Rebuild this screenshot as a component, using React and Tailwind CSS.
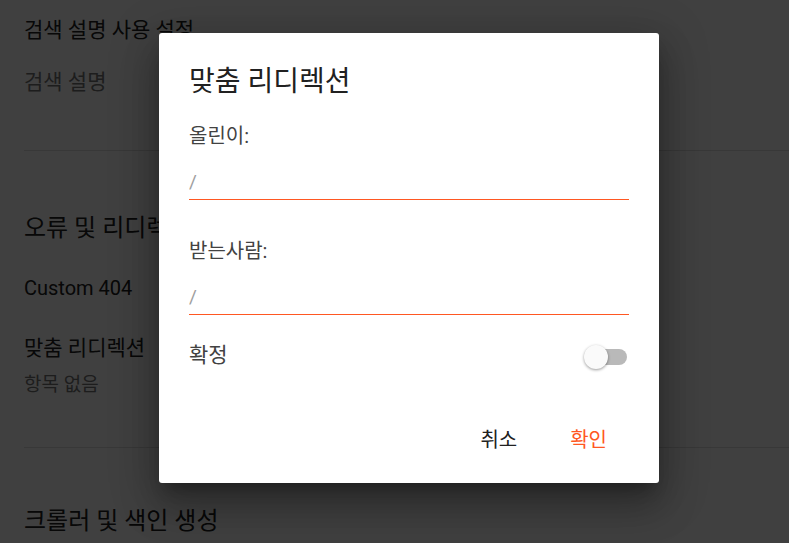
import { useState } from 'react';

const font = { fontFamily: 'Roboto, "Noto Sans CJK KR", sans-serif' };

const Field = ({ label, value, setValue, className }) => (
  <div className={`flex flex-col ${className}`}>
    <label className="text-[20px] leading-[28px] text-[#424242]">{label}</label>
    <input
      className="mt-[18px] w-full border-b border-[#ff5722] pb-[3px] text-[19px] leading-[28px] text-[#212121] placeholder-[#9e9e9e] outline-none"
      placeholder="/"
      value={value}
      onChange={(e) => setValue(e.target.value)}
    />
  </div>
);

const App = () => {
  const [from, setFrom] = useState('');
  const [to, setTo] = useState('');
  const [on, setOn] = useState(false);

  return (
    <div className="relative h-[543px] w-[789px] overflow-hidden bg-white" style={font}>
      {/* page behind the dialog */}
      <div className="flex flex-col px-[24px] text-[#212121]">
        <div className="pt-[15px] text-[21px] leading-[30px]">검색 설명 사용 설정</div>
        <div className="mt-[22px] text-[21px] leading-[30px] text-[#757575]">검색 설명</div>
        <div className="mt-[53px] -mr-[24px] border-t border-[#e0e0e0]" />
        <div className="mt-[61px] text-[24px] leading-[32px]">오류 및 리디렉션</div>
        <div className="mt-[30px] text-[20px] leading-[28px]">Custom 404</div>
        <div className="mt-[32px] text-[21px] leading-[28px]">맞춤 리디렉션</div>
        <div className="mt-[10px] text-[19px] leading-[26px] text-[#757575]">항목 없음</div>
        <div className="mt-[49px] -mr-[24px] border-t border-[#e0e0e0]" />
        <div className="mt-[57px] text-[24px] leading-[32px]">크롤러 및 색인 생성</div>
      </div>

      {/* scrim */}
      <div className="absolute inset-0 bg-black/75" />

      {/* dialog */}
      <div className="absolute left-[159px] top-[33px] flex h-[450px] w-[500px] flex-col rounded-[3px] bg-white px-[30px] pt-[30px] shadow-[0_11px_15px_-7px_rgba(0,0,0,0.3),0_24px_38px_3px_rgba(0,0,0,0.2),0_9px_46px_8px_rgba(0,0,0,0.18)]">
        <h2 className="text-[28px] leading-[38px] text-[#212121]">맞춤 리디렉션</h2>
        <Field className="mt-[21px]" label="올린이:" value={from} setValue={setFrom} />
        <Field className="mt-[37px]" label="받는사람:" value={to} setValue={setTo} />
        <div className="mt-[26px] flex items-center justify-between">
          <span className="text-[21px] leading-[28px] text-[#424242]">확정</span>
          <button
            onClick={() => setOn(!on)}
            className="relative mr-[2px] mt-[4px] h-[16px] w-[38px] rounded-full bg-[#b9b9b9]"
          >
            <span className="absolute -left-[5px] -top-[4px] h-[24px] w-[24px] rounded-full bg-[#fafafa] shadow-[0_1px_3px_rgba(0,0,0,0.4)]" />
          </button>
        </div>
        <div className="mt-auto mb-[23px] flex justify-end gap-[21px] pr-[6px]">
          <button className="px-[16px] py-[6px] text-[20px] leading-[28px] text-[#212121]">취소</button>
          <button className="px-[16px] py-[6px] text-[20px] leading-[28px] text-[#ff5722]">확인</button>
        </div>
      </div>
    </div>
  );
};

export default App;
